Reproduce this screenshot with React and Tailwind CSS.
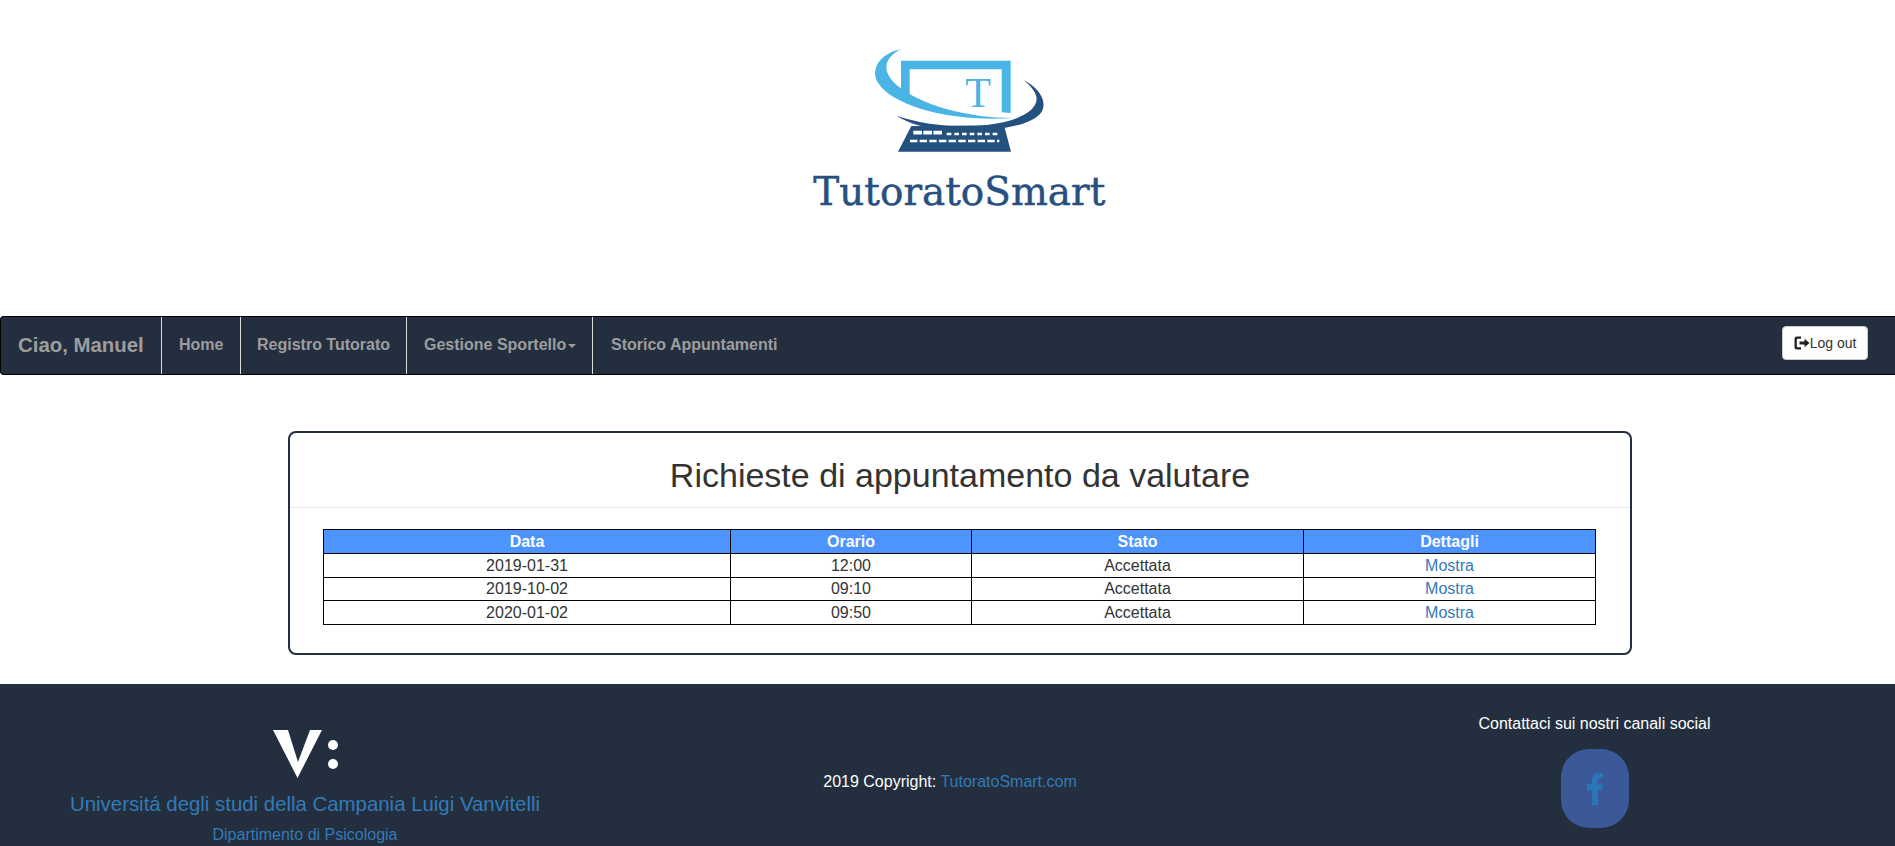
import React from 'react';

// last row is one pixel shorter in the reference
const rows = [
  ['2019-01-31', '12:00', 'leading-[23px]'],
  ['2019-10-02', '09:10', 'leading-[22px]'],
  ['2020-01-02', '09:50', 'leading-[23px]'],
];

const Logo = () => (
  <svg viewBox="0 0 1080 600" className="w-[360px] h-[200px]">
    {/* screen */}
    <path d="M363 92 H692 V249 L665 247 V118 H389 V203 L363 186 Z" fill="#4ab5e5" />
    <text x="594" y="231" textAnchor="middle" fontSize="126" fontFamily="'Liberation Serif', serif" fill="#4ab5e5">T</text>
    {/* keyboard */}
    <path d="M394 288 L354 365 H693 L672 286 Z" fill="#25517f" />
    <path d="M400 308 H490" stroke="#fff" strokeWidth="11" strokeDasharray="26 4" />
    <path d="M500 312 H652" stroke="#fff" strokeWidth="8" strokeDasharray="14 9" />
    <path d="M390 333 H658" stroke="#fff" strokeWidth="8" strokeDasharray="22 7" />
    {/* swooshes */}
    <path d="M362 58 C300 70 268 120 295 160 C340 230 520 278 702 264 C560 264 420 225 350 165 C305 125 310 85 362 58 Z" fill="#4ab5e5" />
    <path d="M730 150 C780 175 802 215 785 245 C755 295 600 310 480 298 C430 292 385 280 350 257 C430 285 540 295 620 285 C700 275 770 250 770 205 C768 185 750 165 730 150 Z" fill="#25517f" />
    <text x="100" y="525" textLength="876" lengthAdjust="spacingAndGlyphs" fontSize="120" fontFamily="'DejaVu Serif', serif" fill="#27507f" stroke="#27507f" strokeWidth="1.500">TutoratoSmart</text>
  </svg>
);

const LogoutIcon = () => (
  <svg viewBox="0 0 16 16" className="w-[16px] h-[16px] shrink-0">
    <path d="M7 1.500 H3 Q0.500 1.500 0.500 4 V12 Q0.500 14.500 3 14.500 H7 V12.300 H3.800 Q2.800 12.300 2.800 11.300 V4.700 Q2.800 3.700 3.800 3.700 H7 Z" fill="#222" />
    <path d="M5.500 6.500 H10.500 V3.800 L15.500 8 L10.500 12.200 V9.500 H5.500 Z" fill="#222" />
  </svg>
);

const App = () => {
  return (
    <div className="h-screen overflow-hidden bg-white text-[#333] font-['Liberation_Sans',Arial,sans-serif] text-sm">
      {/* Logo */}
      <header className="h-[316px] flex justify-center pl-[25px] pt-[30px]">
        <Logo />
      </header>

      {/* Navbar */}
      <nav className="h-[59px] flex items-stretch justify-between bg-[#232f3e] border border-r-0 border-black rounded-l">
        <div className="flex items-stretch font-bold text-base text-[#9d9d9d]">
          <a className="flex items-center w-[161px] pl-[17px] text-[20.4px] border-r border-[#ddd]">Ciao, Manuel</a>
          <a className="flex items-center w-[79px] pl-[17px] pb-[1px] border-r border-[#ddd]">Home</a>
          <a className="flex items-center w-[166px] pl-[16px] pb-[1px] border-r border-[#ddd]">Registro Tutorato</a>
          <a className="flex items-center w-[186px] pl-[17px] pb-[1px] border-r border-[#ddd]">
            Gestione Sportello
            <span className="ml-[2px] mt-[2px] border-x-[4px] border-x-transparent border-t-[4px] border-t-[#9d9d9d]" />
          </a>
          <a className="flex items-center pl-[18px] pb-[1px]">Storico Appuntamenti</a>
        </div>
        <div className="pr-[27px] pt-[9px]">
          <button className="flex items-center justify-center h-[34px] w-[86px] bg-white border border-[#ccc] rounded text-[#333] whitespace-nowrap">
            <LogoutIcon />
            Log out
          </button>
        </div>
      </nav>

      {/* Card */}
      <main className="mt-[56px] ml-[288px] w-[1344px] h-[224px] border-2 border-[#232f3e] rounded-lg">
        <h2 className="h-[75px] border-b border-[#eee] text-[34px] leading-[84px] text-center">Richieste di appuntamento da valutare</h2>
        <div className="pt-[21px] pl-[33px]">
          <table className="table-fixed border-collapse w-[1272px] text-base text-center">
            <colgroup>
              <col className="w-[407px]" />
              <col className="w-[241px]" />
              <col className="w-[332px]" />
              <col className="w-[292px]" />
            </colgroup>
            <thead>
              <tr className="bg-[#4d94ff] text-white leading-[23px]">
                <th className="border border-black font-bold">Data</th>
                <th className="border border-black font-bold">Orario</th>
                <th className="border border-black font-bold">Stato</th>
                <th className="border border-black font-bold">Dettagli</th>
              </tr>
            </thead>
            <tbody>
              {rows.map(([d, t, lh]) => (
                <tr key={d} className={lh}>
                  <td className="border border-black">{d}</td>
                  <td className="border border-black">{t}</td>
                  <td className="border border-black">Accettata</td>
                  <td className="border border-black"><a className="text-[#337ab7]">Mostra</a></td>
                </tr>
              ))}
            </tbody>
          </table>
        </div>
      </main>

      {/* Footer */}
      <footer className="mt-[29px] h-[162px] flex bg-[#232f3e] text-center">
        <div className="w-[610px] shrink-0 flex flex-col items-center pt-[46px] text-[#337ab7]">
          <svg viewBox="0 0 65 48" className="w-[65px] h-[48px] shrink-0">
            <path d="M0 0 H15 L25 32 L37 0 H49 L24.500 48 Z" fill="#fff" />
            <circle cx="60" cy="15" r="5" fill="#fff" />
            <circle cx="60" cy="34" r="5" fill="#fff" />
          </svg>
          <div className="mt-[12px] text-[20.4px] leading-[28px]">Universitá degli studi della Campania Luigi Vanvitelli</div>
          <div className="mt-[6px] text-base leading-[22px]">Dipartimento di Psicologia</div>
        </div>
        <div className="w-[680px] shrink-0 pt-[87px] text-base leading-[22px] text-white">
          2019 Copyright: <a className="text-[#337ab7]">TutoratoSmart.com</a>
        </div>
        <div className="w-[605px] shrink-0 flex flex-col items-center pl-[4px] pt-[29px] text-base leading-[22px] text-white">
          <div>Contattaci sui nostri canali social</div>
          <div className="mt-[14px] w-[68px] h-[79px] shrink-0 rounded-[28px] bg-[#3b5998] flex items-center justify-center">
            <svg viewBox="0 0 16 32" className="w-[16px] h-[32px]">
              <path d="M5 32 V17 H0 V11 H5 V7 Q5 0 12 0 H16 V5 H13 Q11 5 11 7 V11 H16 L15 17 H11 V32 Z" fill="#2a76b8" />
            </svg>
          </div>
        </div>
      </footer>
    </div>
  );
};

export default App;
